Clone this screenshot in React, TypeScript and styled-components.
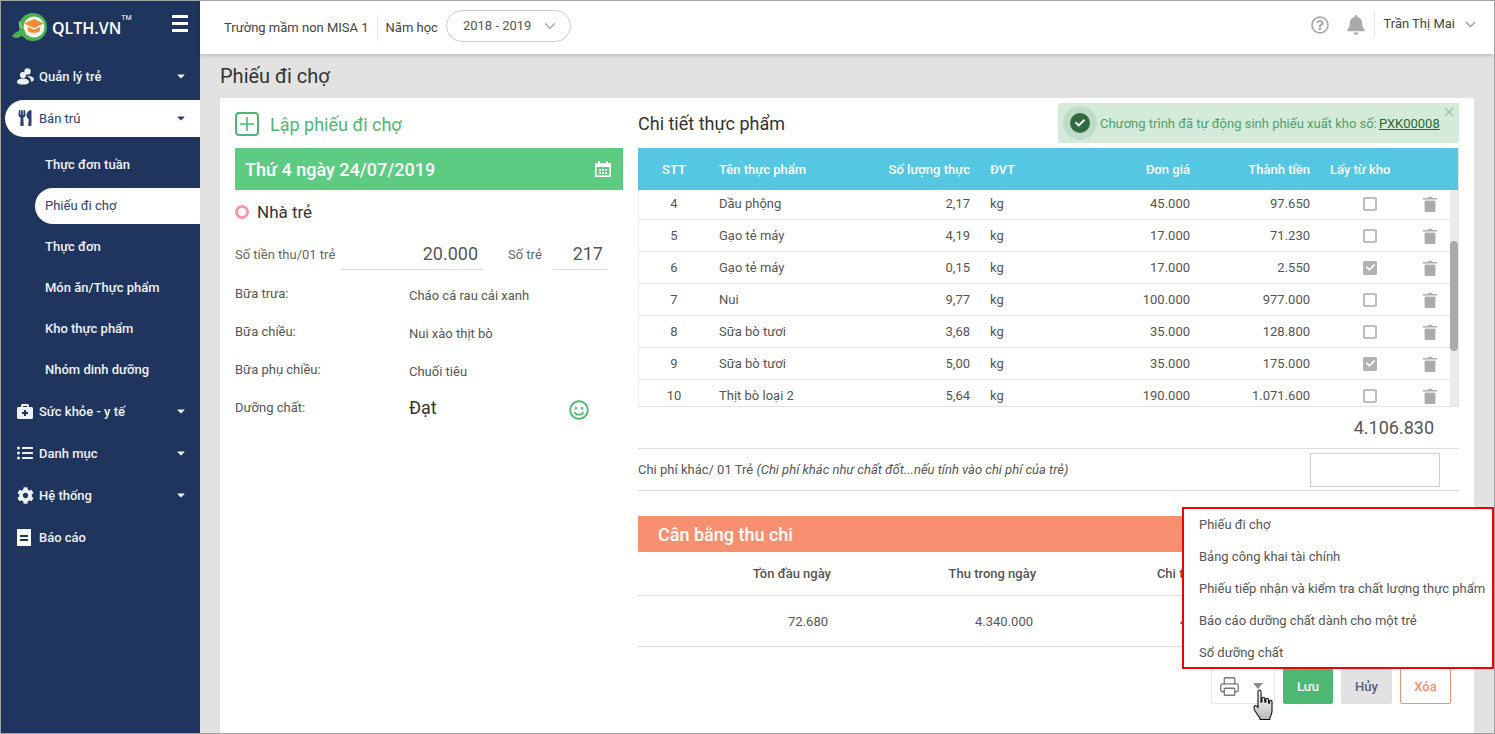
import React from 'react';
import styled, { createGlobalStyle } from 'styled-components';
import { ChevronDown, Printer } from 'lucide-react';
import { FaBell, FaBriefcaseMedical, FaCaretDown, FaCheck, FaCog, FaListUl, FaRegQuestionCircle, FaRegSmile, FaUtensils } from 'react-icons/fa';

const Global = createGlobalStyle`
  html, body { margin: 0; padding: 0; height: 100%; overflow: hidden; }
  #root { height: 100%; }
  * { box-sizing: border-box; }
  body { font-family: Roboto, "Noto Sans", Arial, sans-serif; font-size: 13px; color: #555; }
`;

const Frame = styled.div`
  position: relative; display: flex; height: 734px; width: 1495px;
  border: 1px solid #a3a3a3; overflow: hidden; background: #e2e2e2;
`;
const Sidebar = styled.aside`
  width: 199px; flex: none; background: #1f355e; color: #eef1f6;
`;
const Brand = styled.div`
  height: 54px; display: flex; align-items: center; padding: 0 10px 2px 10px; position: relative;
`;
const BrandName = styled.span`
  font-family: "Open Sans", Roboto, sans-serif; font-size: 16px; font-weight: 600; color: #fff; margin-left: 3px; margin-top: 1px;
`;
const Tm = styled.sup`
  font-size: 7px; color: #fff; align-self: flex-start; margin-top: 13px;
`;
const Burger = styled.div`
  margin-left: auto; margin-right: 2px; margin-top: -8px; width: 16px; display: flex; flex-direction: column; gap: 4px;
  & > i { display: block; height: 3px; background: #fff; }
`;
const NavItem = styled.div<{ $active?: boolean }>`
  height: 42px; display: flex; align-items: center; margin-left: 4px;
  font-weight: ${p => (p.$active ? 400 : 500)}; font-size: 13px; padding: 0 13px 0 12px; position: relative;
  color: ${p => (p.$active ? '#2b4270' : '#eef1f6')};
  &::before {
    content: ''; position: absolute; inset: 3px 0 2px 0; border-radius: 19px 0 0 19px;
    background: ${p => (p.$active ? '#fff' : 'transparent')};
  }
  & > * { position: relative; }
`;
const NavIcon = styled.span`
  width: 22px; height: 18px; display: flex; align-items: center; font-size: 16px; flex: none;
`;
const NavLabel = styled.span`
  flex: 1;
`;
const SubList = styled.div`
  padding-top: 5px;
`;
const SubItem = styled.div<{ $active?: boolean }>`
  height: 41px; display: flex; align-items: center; margin-left: 34px; padding-left: 10px;
  font-weight: ${p => (p.$active ? 400 : 500)}; font-size: 13px; position: relative;
  color: ${p => (p.$active ? '#2b4270' : '#eef1f6')};
  &::before {
    content: ''; position: absolute; inset: 3px 0 2px 0; border-radius: 18px 0 0 18px;
    background: ${p => (p.$active ? '#fff' : 'transparent')};
  }
  & > span { position: relative; }
`;
const Main = styled.main`
  flex: 1; min-width: 0; display: flex; flex-direction: column;
`;
const Header = styled.header`
  height: 53px; flex: none; background: #fff; box-shadow: 0 1px 4px rgba(0,0,0,.22);
  display: flex; align-items: center; padding: 0 15px 0 24px; color: #444; position: relative;
`;
const HeaderDivider = styled.span`
  width: 1px; height: 26px; background: #e4e4e4; margin: 0 8px;
`;
const SchoolName = styled.span`
  font-size: 13px;
`;
const YearSelect = styled.div`
  margin: 0 0 4px 8px; width: 125px; height: 32px; border: 1px solid #ccc; border-radius: 16px;
  display: flex; align-items: center; justify-content: space-between; padding: 0 11px 0 16px; font-size: 13px; color: #555;
`;
const HeaderRight = styled.div`
  margin-left: auto; margin-bottom: 6px; display: flex; align-items: center; color: #aaa;
`;
const HelpIcon = styled(FaRegQuestionCircle)`
  margin-right: 17px;
`;
const UserName = styled.span`
  color: #444; font-size: 13px; margin: 0 7px 2px 0;
`;
const ContentArea = styled.div`
  flex: 1; min-height: 0; display: flex; flex-direction: column; padding: 0 20px;
`;
const PageTitle = styled.h1`
  margin: 0; height: 44px; display: flex; align-items: center; font-size: 20px; font-weight: 400; color: #333;
`;
const Panel = styled.section`
  flex: 1; min-height: 0; background: #fff; display: flex; gap: 15px; padding: 5px 15px 0;
`;
const LeftCol = styled.div`
  width: 388px; flex: none;
`;
const CreateRow = styled.div`
  height: 45px; display: flex; align-items: center; padding-bottom: 3px; font-size: 18px; color: #4db872; gap: 11px;
`;
const PlusBox = styled.span`
  width: 24px; height: 24px; border: 2px solid #4db872; border-radius: 4px; display: flex; align-items: center; justify-content: center;
`;
const DateBar = styled.div`
  height: 42px; background: #5ecb82; color: #fff; font-size: 18px; font-weight: 500;
  display: flex; align-items: center; justify-content: space-between; padding: 0 12px 0 10px;
`;
const GroupRow = styled.div`
  height: 42px; display: flex; align-items: center; gap: 8px; font-size: 17px; color: #333; padding-top: 1px;
`;
const Ring = styled.span`
  width: 14px; height: 14px; border: 3px solid #ff95a9; border-radius: 50%;
`;
const MoneyRow = styled.div`
  margin-top: 6px; height: 32px; display: grid; grid-template-columns: 106px 142px 70px 55px; align-items: stretch;
`;
const MoneyLabel = styled.span<{ $indent?: boolean }>`
  display: flex; align-items: center; color: #666; font-size: 13px; padding-left: ${p => (p.$indent ? '25px' : '0')};
`;
const MoneyValue = styled.span`
  border-bottom: 1px solid #ddd; display: flex; align-items: center; justify-content: flex-end; padding-right: 5px; font-size: 18px; color: #555;
`;
const Meals = styled.div`
  margin-top: 9px;
`;
const MealRow = styled.div`
  height: 38px; display: grid; grid-template-columns: 174px 160px 1fr; align-items: start;
`;
const MealLabel = styled.span`
  padding-top: 7px; line-height: 16px; color: #555; font-size: 13px;
`;
const MealValue = styled.span<{ $big?: boolean }>`
  padding-top: ${p => (p.$big ? '4px' : '9px')}; line-height: ${p => (p.$big ? '22px' : '16px')};
  font-size: ${p => (p.$big ? '18px' : '13px')}; color: ${p => (p.$big ? '#333' : '#555')};
`;
const Smile = styled.span`
  padding-top: 7px; color: #4db872; display: flex; font-size: 20px;
`;
const RightCol = styled.div`
  flex: 1; min-width: 0;
`;
const DetailHead = styled.div`
  height: 45px; display: flex; justify-content: space-between; align-items: flex-start;
`;
const DetailTitle = styled.h2`
  margin: 0; font-size: 18px; font-weight: 400; color: #333; line-height: 42px;
`;
const Toast = styled.div`
  position: relative; width: 401px; height: 40px; background: #d4ebda; border-radius: 3px;
  display: flex; align-items: center; padding: 0 0 0 5px; color: #4fa06c; font-size: 13px;
`;
const ToastHalo = styled.span`
  width: 34px; height: 34px; border-radius: 50%; background: #bfdcc8; display: flex; align-items: center; justify-content: center; margin-right: 3px; flex: none;
`;
const ToastDot = styled.span`
  width: 20px; height: 20px; border-radius: 50%; background: #2f6b3f; color: #fff; display: flex; align-items: center; justify-content: center; font-size: 10px;
`;
const ToastLink = styled.a`
  color: #1f6b3c; text-decoration: underline; margin-left: 2px;
`;
const ToastClose = styled.span`
  position: absolute; right: 5px; top: 4px; width: 10px; height: 10px; display: flex;
`;
const Table = styled.div`
  height: 259px; border-bottom: 1px solid #e3e3e3; border-right: 1px solid #e3e3e3; display: flex; flex-direction: column;
`;
const columns = '72px 160px 110px 100px 120px 120px 100px 20px 10px';
const TableHead = styled.div`
  height: 42px; flex: none; background: #56c7e3; color: #fff; font-weight: 500; font-size: 13px;
  display: grid; grid-template-columns: ${columns}; align-items: center;
`;
const Cell = styled.span<{ $align?: string; $pl?: number; $pr?: number }>`
  text-align: ${p => p.$align || 'left'}; padding-left: ${p => p.$pl || 0}px; padding-right: ${p => p.$pr || 0}px;
  display: block; white-space: nowrap;
`;
const TableBody = styled.div`
  flex: 1; min-height: 0; display: flex; overflow: hidden;
`;
const Rows = styled.div`
  flex: 1; margin-top: -2px; min-width: 0; border-left: 1px solid #eee;
`;
const Row = styled.div`
  height: 32px; border-bottom: 1px solid #e6e6e6; margin-left: -1px;
  display: grid; grid-template-columns: ${columns}; align-items: center; color: #555;
`;
const Scrollbar = styled.div`
  width: 8px; flex: none; background: #ececec; padding-top: 51px;
  &::after { content: ''; display: block; height: 110px; border-radius: 4px; background: #aaa; }
`;
const Box = styled.span<{ $on?: boolean }>`
  margin: 0 auto; width: 14px; height: 14px; border-radius: 2px; display: flex; align-items: center; justify-content: center;
  border: 2px solid ${p => (p.$on ? '#b2b2b2' : '#bdbdbd')}; background: ${p => (p.$on ? '#b2b2b2' : '#fff')}; color: #fff; font-size: 9px;
`;
const TotalRow = styled.div`
  height: 42px; border-bottom: 1px solid #ddd; display: flex; align-items: center; justify-content: flex-end; padding-right: 25px; font-size: 18px; color: #555;
`;
const OtherRow = styled.div`
  height: 42px; border-bottom: 1px solid #ddd; display: flex; align-items: center; justify-content: space-between; padding-right: 19px; font-size: 13px; color: #555;
`;
const OtherInput = styled.div`
  width: 130px; height: 34px; border: 1px solid #ccc;
`;
const BalanceBar = styled.div`
  margin-top: 25px; height: 36px; background: #f78f70; color: #fff; font-size: 18px; font-weight: 500; display: flex; align-items: center; padding-left: 20px;
`;
const BalanceRow = styled.div<{ $head?: boolean }>`
  display: grid; grid-template-columns: repeat(4, 205px); align-items: center; text-align: right;
  height: ${p => (p.$head ? '44px' : '51px')}; border-bottom: 1px solid #ddd;
  font-weight: ${p => (p.$head ? 500 : 400)}; color: #555;
  padding-right: 1px;
  & > span { padding-right: ${p => (p.$head ? '12px' : '15px')}; }
`;
const Actions = styled.div`
  margin-top: 21px; height: 36px; display: flex; justify-content: flex-end; gap: 8px; padding-right: 8px;
`;
const PrintButton = styled.div`
  width: 64px; border: 1px solid #e8e8e8; border-radius: 2px; display: flex; align-items: center; padding-left: 7px; gap: 13px; color: #777;
`;
const Caret = styled.span`
  width: 0; height: 0; border: 5px solid transparent; border-top: 6px solid #8c8c8c; border-bottom: 0;
`;
const ActionButton = styled.button<{ $kind: 'save' | 'cancel' | 'del' }>`
  width: ${p => (p.$kind === 'save' ? '50px' : '51px')}; border-radius: 2px; font: 500 13px Roboto, sans-serif; padding: 0;
  border: 1px solid ${p => (p.$kind === 'save' ? '#4db872' : p.$kind === 'cancel' ? '#e2e2e2' : '#f78f70')};
  background: ${p => (p.$kind === 'save' ? '#4db872' : p.$kind === 'cancel' ? '#e2e2e2' : '#fff')};
  color: ${p => (p.$kind === 'save' ? '#fff' : p.$kind === 'cancel' ? '#5a5a78' : '#f78f70')};
`;
const Menu = styled.div`
  position: absolute; left: 1181px; top: 506px; width: 312px; height: 162px; background: #fff; border: 2px solid #f00000; overflow: hidden;
`;
const MenuList = styled.div`
  margin-top: -1px;
`;
const MenuItem = styled.div`
  height: 32px; display: flex; align-items: center; padding-left: 15px; font-size: 13px; color: #555; white-space: nowrap;
`;
const Hand = styled.svg`
  position: absolute; left: 1252px; top: 688px;
`;
const TrashIcon = styled.svg`
  display: block; margin: 0 auto;
`;

const Logo = () => (
  <svg width="38" height="30" viewBox="0 0 38 30">
    <circle cx="22" cy="15" r="14" fill="#4caf50" />
    <circle cx="23" cy="15" r="10.5" fill="#f5f5ee" />
    <path d="M1 24c3-4 7-6 13-6-1 4-4 8-9 8-2 0-3-1-4-2z" fill="#4caf50" />
    <path d="M8 9c2 1 4 4 3 8-2-1-4-4-3-8z" fill="#7cc576" />
    <path d="M23 7l10 4.5-10 4.5-10-4.5z" fill="#ef8c35" />
    <path d="M17 15v4c3 2.5 9 2.5 12 0v-4l-6 2.6z" fill="#ef8c35" />
  </svg>
);
const People = () => (
  <svg width="17" height="17" viewBox="0 0 17 17" fill="#eef1f6">
    <circle cx="10.5" cy="3.4" r="3.2" />
    <path d="M11.5 8c3 .1 5.5 1.2 5.5 3.2 0 1.6-1.5 2.3-3 2.5.2-2.4-1.2-4.4-3.8-5.3.4-.2.8-.4 1.3-.4z" />
    <circle cx="6" cy="7" r="3.1" />
    <path d="M0 14c0-2.4 2.6-3.6 6-3.6s6 1.2 6 3.6c0 1.8-2.6 2.6-6 2.6s-6-.8-6-2.6z" />
  </svg>
);
const Doc = () => (
  <svg width="14" height="17" viewBox="0 0 14 17"><path d="M0 0h14v17H0z" fill="#fff" /><path d="M3 6h8v2H3zM3 10h8v2H3z" fill="#1f355e" /></svg>
);
const Trash = () => (
  <TrashIcon width="14" height="16" viewBox="0 0 14 16">
    <path d="M0 2h5V0.7h4V2h5v1.4H0z" fill="#ababab" /><path d="M1.6 4.6h10.8V16H1.6z" fill="#ababab" />
  </TrashIcon>
);
const Calendar = () => (
  <svg width="16" height="16" viewBox="0 0 16 16"><path d="M3 0h2v2h6V0h2v2h3v14H0V2h3z" fill="#fff" /><path d="M1.6 6h12.8v8.4H1.6z" fill="#5ecb82" /><path d="M4 8h2v2H4zM7 8h2v2H7zM10 8h2v2h-2zM4 11h2v2H4zM7 11h2v2H7zM10 11h2v2h-2z" fill="#fff" /></svg>
);

const rows = [
  ['4', 'Dầu phộng', '2,17', 'kg', '45.000', '97.650', false],
  ['5', 'Gạo tẻ máy', '4,19', 'kg', '17.000', '71.230', false],
  ['6', 'Gạo tẻ máy', '0,15', 'kg', '17.000', '2.550', true],
  ['7', 'Nui', '9,77', 'kg', '100.000', '977.000', false],
  ['8', 'Sữa bò tươi', '3,68', 'kg', '35.000', '128.800', false],
  ['9', 'Sữa bò tươi', '5,00', 'kg', '35.000', '175.000', true],
  ['10', 'Thịt bò loại 2', '5,64', 'kg', '190.000', '1.071.600', false],
] as const;

const subItems = ['Thực đơn tuần', 'Phiếu đi chợ', 'Thực đơn', 'Món ăn/Thực phẩm', 'Kho thực phẩm', 'Nhóm dinh dưỡng'];
const meals = [['Bữa trưa:', 'Cháo cá rau cải xanh'], ['Bữa chiều:', 'Nui xào thịt bò'], ['Bữa phụ chiều:', 'Chuối tiêu']];
const menu = ['Phiếu đi chợ', 'Bảng công khai tài chính', 'Phiếu tiếp nhận và kiểm tra chất lượng thực phẩm', 'Báo cáo dưỡng chất dành cho một trẻ', 'Sổ dưỡng chất'];

export default function App() {
  return (
    <Frame>
      <Global />
      <Sidebar>
        <Brand>
          <Logo />
          <BrandName>QLTH.VN</BrandName>
          <Tm>TM</Tm>
          <Burger><i /><i /><i /></Burger>
        </Brand>
        <NavItem><NavIcon><People /></NavIcon><NavLabel>Quản lý trẻ</NavLabel><FaCaretDown size={12} /></NavItem>
        <NavItem $active><NavIcon><FaUtensils /></NavIcon><NavLabel>Bán trú</NavLabel><FaCaretDown size={12} /></NavItem>
        <SubList>
          {subItems.map((s, i) => <SubItem key={s} $active={i === 1}><span>{s}</span></SubItem>)}
        </SubList>
        <NavItem><NavIcon><FaBriefcaseMedical /></NavIcon><NavLabel>Sức khỏe - y tế</NavLabel><FaCaretDown size={12} /></NavItem>
        <NavItem><NavIcon><FaListUl /></NavIcon><NavLabel>Danh mục</NavLabel><FaCaretDown size={12} /></NavItem>
        <NavItem><NavIcon><FaCog size={17} /></NavIcon><NavLabel>Hệ thống</NavLabel><FaCaretDown size={12} /></NavItem>
        <NavItem><NavIcon><Doc /></NavIcon><NavLabel>Báo cáo</NavLabel></NavItem>
      </Sidebar>
      <Main>
        <Header>
          <SchoolName>Trường mầm non MISA 1</SchoolName>
          <HeaderDivider />
          <span>Năm học</span>
          <YearSelect>2018 - 2019<ChevronDown size={18} color="#a9a9a9" /></YearSelect>
          <HeaderRight>
            <HelpIcon size={18} />
            <FaBell size={20} />
            <HeaderDivider />
            <UserName>Trần Thị Mai</UserName>
            <ChevronDown size={17} color="#a9a9a9" />
          </HeaderRight>
        </Header>
        <ContentArea>
          <PageTitle>Phiếu đi chợ</PageTitle>
          <Panel>
            <LeftCol>
              <CreateRow>
                <PlusBox>
                  <svg width="14" height="14" viewBox="0 0 14 14"><path d="M7 0v14M0 7h14" stroke="#4db872" strokeWidth="1.6" /></svg>
                </PlusBox>
                Lập phiếu đi chợ
              </CreateRow>
              <DateBar>Thứ 4 ngày 24/07/2019<Calendar /></DateBar>
              <GroupRow><Ring />Nhà trẻ</GroupRow>
              <MoneyRow>
                <MoneyLabel>Số tiền thu/01 trẻ</MoneyLabel>
                <MoneyValue>20.000</MoneyValue>
                <MoneyLabel $indent>Số trẻ</MoneyLabel>
                <MoneyValue>217</MoneyValue>
              </MoneyRow>
              <Meals>
                {meals.map(([a, b]) => (
                  <MealRow key={a}><MealLabel>{a}</MealLabel><MealValue>{b}</MealValue></MealRow>
                ))}
                <MealRow>
                  <MealLabel>Dưỡng chất:</MealLabel>
                  <MealValue $big>Đạt</MealValue>
                  <Smile><FaRegSmile /></Smile>
                </MealRow>
              </Meals>
            </LeftCol>
            <RightCol>
              <DetailHead>
                <DetailTitle>Chi tiết thực phẩm</DetailTitle>
                <Toast>
                  <ToastHalo><ToastDot><FaCheck /></ToastDot></ToastHalo>
                  Chương trình đã tự động sinh phiếu xuất kho số:
                  <ToastLink>PXK00008</ToastLink>
                  <ToastClose>
                    <svg width="10" height="10" viewBox="0 0 10 10"><path d="M1 1l8 8M9 1l-8 8" stroke="#a9b8ad" strokeWidth="1.2" /></svg>
                  </ToastClose>
                </Toast>
              </DetailHead>
              <Table>
                <TableHead>
                  <Cell $align="center">STT</Cell>
                  <Cell $pl={9}>Tên thực phẩm</Cell>
                  <Cell $align="right" $pr={10}>Số lượng thực</Cell>
                  <Cell $pl={10}>ĐVT</Cell>
                  <Cell $align="right" $pr={10}>Đơn giá</Cell>
                  <Cell $align="right" $pr={10}>Thành tiền</Cell>
                  <Cell $pl={10}>Lấy từ kho</Cell>
                </TableHead>
                <TableBody>
                  <Rows>
                    {rows.map(r => (
                      <Row key={r[0]}>
                        <Cell $align="center">{r[0]}</Cell>
                        <Cell $pl={9}>{r[1]}</Cell>
                        <Cell $align="right" $pr={10}>{r[2]}</Cell>
                        <Cell $pl={10}>{r[3]}</Cell>
                        <Cell $align="right" $pr={10}>{r[4]}</Cell>
                        <Cell $align="right" $pr={10}>{r[5]}</Cell>
                        <Box $on={r[6]}>{r[6] ? <FaCheck /> : null}</Box>
                        <Trash />
                      </Row>
                    ))}
                  </Rows>
                  <Scrollbar />
                </TableBody>
              </Table>
              <TotalRow>4.106.830</TotalRow>
              <OtherRow>
                <span>Chi phí khác/ 01 Trẻ <i>(Chi phí khác như chất đốt...nếu tính vào chi phí của trẻ)</i></span>
                <OtherInput />
              </OtherRow>
              <BalanceBar>Cân bằng thu chi</BalanceBar>
              <BalanceRow $head>
                <span>Tồn đầu ngày</span><span>Thu trong ngày</span><span>Chi trong ngày</span><span>Tồn cuối ngày</span>
              </BalanceRow>
              <BalanceRow>
                <span>72.680</span><span>4.340.000</span><span>4.306.830</span><span>105.850</span>
              </BalanceRow>
              <Actions>
                <PrintButton><Printer size={21} strokeWidth={1.5} /><Caret /></PrintButton>
                <ActionButton $kind="save">Lưu</ActionButton>
                <ActionButton $kind="cancel">Hủy</ActionButton>
                <ActionButton $kind="del">Xóa</ActionButton>
              </Actions>
            </RightCol>
          </Panel>
        </ContentArea>
      </Main>
      <Menu>
        <MenuList>{menu.map(m => <MenuItem key={m}>{m}</MenuItem>)}</MenuList>
      </Menu>
      <Hand width="22" height="32" viewBox="0 0 22 32">
        <defs><linearGradient id="hg" x1="0" y1="0" x2="0" y2="1"><stop offset="0" stopColor="#fff" /><stop offset="1" stopColor="#b9b9b9" /></linearGradient></defs>
        <path d="M5 2.5c0-2 3-2 3 0V13l1-.2V9.5c0-1.7 2.8-1.7 2.8 0V13l1 .1v-2.6c0-1.6 2.7-1.6 2.7 0V14l1 .2v-1.7c0-1.5 2.5-1.5 2.5 0V22c0 3-1.2 5-2.2 7v1.5H7V29c-2-3-6-7-6-10.5 0-2 1.6-2.4 2.7-1.3L5 18.5z" fill="url(#hg)" stroke="#111" strokeWidth="1.1" />
      </Hand>
    </Frame>
  );
}
